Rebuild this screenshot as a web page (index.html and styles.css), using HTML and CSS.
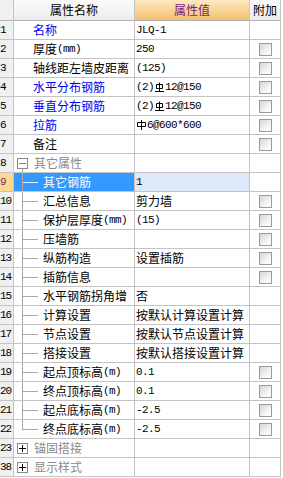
FILE: index.html
```html
<!DOCTYPE html>
<html>
<head>
<meta charset="utf-8">
<link rel="stylesheet" href="styles.css">
</head>
<body>
<div class="grid">
  <div class="row head"><div class="hn"></div><div class="hh">属性名称</div><div class="hv">属性值</div><div class="hh">附加</div></div>
  <div class="row"><div class="n">1</div><div class="nm blue">名称</div><div class="v"><span class="m">JLQ-1</span></div><div class="a"></div></div>
  <div class="row"><div class="n">2</div><div class="nm">厚度<span class="u">(mm)</span></div><div class="v"><span class="m">250</span></div><div class="a"><span class="cb"></span></div></div>
  <div class="row"><div class="n">3</div><div class="nm">轴线距左墙皮距离</div><div class="v"><span class="m">(125)</span></div><div class="a"><span class="cb"></span></div></div>
  <div class="row"><div class="n">4</div><div class="nm blue">水平分布钢筋</div><div class="v"><span class="m">(2)</span><svg class="sym" width="9" height="10" viewBox="0 0 9 10"><path d="M1.5 2.5h6v4h-6z M4.5 0.5v9 M0 9.5h9" fill="none" stroke="#000" stroke-width="1"/></svg><span class="m">12@150</span></div><div class="a"><span class="cb"></span></div></div>
  <div class="row"><div class="n">5</div><div class="nm blue">垂直分布钢筋</div><div class="v"><span class="m">(2)</span><svg class="sym" width="9" height="10" viewBox="0 0 9 10"><path d="M1.5 2.5h6v4h-6z M4.5 0.5v9 M0 9.5h9" fill="none" stroke="#000" stroke-width="1"/></svg><span class="m">12@150</span></div><div class="a"><span class="cb"></span></div></div>
  <div class="row"><div class="n">6</div><div class="nm blue">拉筋</div><div class="v"><svg class="sym" width="9" height="10" viewBox="0 0 9 10"><path d="M0.5 2.5h8v4h-8z M4.5 0v10" fill="none" stroke="#000" stroke-width="1"/></svg><span class="m">6@600*600</span></div><div class="a"><span class="cb"></span></div></div>
  <div class="row"><div class="n">7</div><div class="nm">备注</div><div class="v"></div><div class="a"><span class="cb"></span></div></div>
  <div class="row"><div class="n">8</div><div class="nm grp open"><span class="tg minus"></span>其它属性</div><div class="v"></div><div class="a"></div></div>
  <div class="row sel"><div class="n">9</div><div class="nm ch">其它钢筋</div><div class="v"><span class="m">1</span></div><div class="a"></div></div>
  <div class="row"><div class="n">10</div><div class="nm ch">汇总信息</div><div class="v">剪力墙</div><div class="a"><span class="cb"></span></div></div>
  <div class="row"><div class="n">11</div><div class="nm ch">保护层厚度<span class="u">(mm)</span></div><div class="v"><span class="m">(15)</span></div><div class="a"><span class="cb"></span></div></div>
  <div class="row"><div class="n">12</div><div class="nm ch">压墙筋</div><div class="v"></div><div class="a"><span class="cb"></span></div></div>
  <div class="row"><div class="n">13</div><div class="nm ch">纵筋构造</div><div class="v">设置插筋</div><div class="a"><span class="cb"></span></div></div>
  <div class="row"><div class="n">14</div><div class="nm ch">插筋信息</div><div class="v"></div><div class="a"><span class="cb"></span></div></div>
  <div class="row"><div class="n">15</div><div class="nm ch">水平钢筋拐角增</div><div class="v">否</div><div class="a"></div></div>
  <div class="row"><div class="n">16</div><div class="nm ch">计算设置</div><div class="v">按默认计算设置计算</div><div class="a"></div></div>
  <div class="row"><div class="n">17</div><div class="nm ch">节点设置</div><div class="v">按默认节点设置计算</div><div class="a"></div></div>
  <div class="row"><div class="n">18</div><div class="nm ch">搭接设置</div><div class="v">按默认搭接设置计算</div><div class="a"></div></div>
  <div class="row"><div class="n">19</div><div class="nm ch">起点顶标高<span class="u">(m)</span></div><div class="v"><span class="m">0.1</span></div><div class="a"><span class="cb"></span></div></div>
  <div class="row"><div class="n">20</div><div class="nm ch">终点顶标高<span class="u">(m)</span></div><div class="v"><span class="m">0.1</span></div><div class="a"><span class="cb"></span></div></div>
  <div class="row"><div class="n">21</div><div class="nm ch">起点底标高<span class="u">(m)</span></div><div class="v"><span class="m">-2.5</span></div><div class="a"><span class="cb"></span></div></div>
  <div class="row"><div class="n">22</div><div class="nm ch last">终点底标高<span class="u">(m)</span></div><div class="v"><span class="m">-2.5</span></div><div class="a"><span class="cb"></span></div></div>
  <div class="row"><div class="n">23</div><div class="nm grp"><span class="tg plus"></span>锚固搭接</div><div class="v"></div><div class="a"></div></div>
  <div class="row"><div class="n">38</div><div class="nm grp"><span class="tg plus"></span>显示样式</div><div class="v"></div><div class="a"></div></div>
</div>
</body>
</html>
```

FILE: styles.css
```css
html, body {
  margin: 0;
  padding: 0;
  background: #ffffff;
}

.grid {
  width: 281px;
  font-family: "Noto Sans CJK SC", sans-serif;
  font-size: 12px;
  color: #000;
}

.row {
  display: grid;
  grid-template-columns: 14px 121px 115px 31px;
  height: 19px;
}

.row.head {
  height: 21px;
}

.row > div {
  box-sizing: border-box;
  display: flex;
  align-items: center;
  border-right: 1px solid #c4c4c4;
  border-bottom: 1px solid #c4c4c4;
  white-space: nowrap;
  overflow: hidden;
  line-height: 18px;
}

.head > div {
  justify-content: center;
  border-bottom-color: #b4b4b4;
}

.hn {
  background: #f0f0f0;
}

.hh {
  background: linear-gradient(#fbfbfb, #ececec);
}

.hv {
  background: linear-gradient(#fde9c1, #f4c06a);
  color: #7b1a86;
}

.n {
  background: #f0f0f0;
  font-family: "Liberation Mono", monospace;
  font-size: 11px;
  letter-spacing: -1px;
  padding-left: 0;
}

.nm {
  position: relative;
  padding-left: 19px;
}

.nm.ch {
  padding-left: 29px;
}

.blue { color: #0000f0; }

.grp {
  color: #8a8a8a;
  padding-left: 3px !important;
}

.v {
  padding-left: 1px;
}

.m, .u {
  font-family: "Liberation Mono", monospace;
  font-size: 11px;
  letter-spacing: -0.6px;
}

.sym {
  display: block;
  margin: 0 1px 0 1px;
  flex: none;
}

.a {
  justify-content: center;
}

.cb {
  display: block;
  width: 11px;
  height: 11px;
  border: 1px solid #9a9a9a;
  background: linear-gradient(135deg, #d6d6d6, #f7f7f7 70%, #ffffff);
  flex: none;
}

.tg {
  display: block;
  position: relative;
  flex: none;
  width: 9px;
  height: 9px;
  border: 1px solid #8a8a8a;
  background: #fff;
  margin-right: 6px;
}

.tg::before {
  content: "";
  position: absolute;
  left: 1px;
  top: 4px;
  width: 7px;
  height: 1px;
  background: #000;
}

.tg.plus::after {
  content: "";
  position: absolute;
  left: 4px;
  top: 1px;
  width: 1px;
  height: 7px;
  background: #000;
}

.tg.minus::before {
  background: #808080;
}

.open::after {
  content: "";
  position: absolute;
  left: 8px;
  top: 15px;
  bottom: -1px;
  width: 1px;
  background: #a8a8a8;
}

.ch::before {
  content: "";
  position: absolute;
  left: 8px;
  top: 0;
  bottom: -1px;
  width: 1px;
  background: #a8a8a8;
}

.ch.last::before {
  bottom: auto;
  height: 10px;
}

.ch::after {
  content: "";
  position: absolute;
  left: 9px;
  top: 9px;
  width: 15px;
  height: 1px;
  background: #a8a8a8;
}

.sel .n {
  background: #fcd98e;
  color: #8a1a8a;
}

.sel .nm {
  background: #3399ff;
  color: #fff;
}

.sel .nm::after {
  background: #e6f0ff;
}

.sel .v {
  background: #dde9f8;
}
```
